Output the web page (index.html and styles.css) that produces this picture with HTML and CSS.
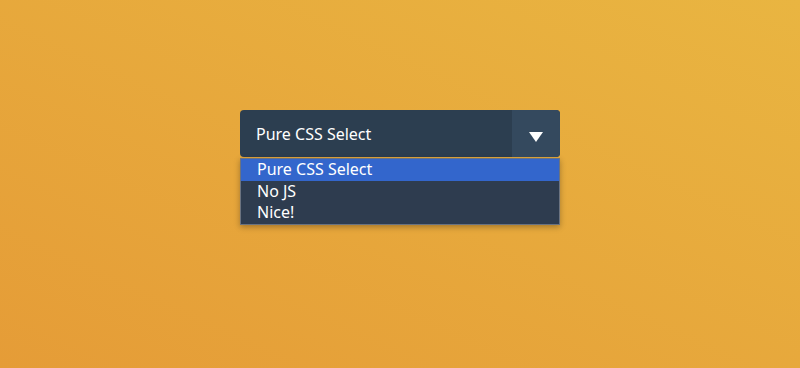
FILE: index.html
```html
<!DOCTYPE html>
<html>
<head>
<meta charset="utf-8">
<link rel="stylesheet" href="styles.css">
</head>
<body>
<div class="page">
  <div class="wrap">
    <div class="select">
      <span class="value">Pure CSS Select</span>
      <span class="arrow"><svg width="14" height="10" viewBox="0 0 14 10"><path d="M0 0H14L7 10Z" fill="#fff"/></svg></span>
    </div>
    <ul class="list">
      <li class="opt active">Pure CSS Select</li>
      <li class="opt">No JS</li>
      <li class="opt">Nice!</li>
    </ul>
  </div>
</div>
</body>
</html>
```
FILE: styles.css
```css
html, body { margin: 0; padding: 0; }
body {
  width: 800px;
  height: 368px;
  overflow: hidden;
  font-family: "Noto Sans", "Open Sans", sans-serif;
}
.page {
  width: 800px;
  height: 368px;
  background: linear-gradient(to top right, #e59c37, #e9b541);
  display: flex;
  justify-content: center;
  padding-top: 110px;
  box-sizing: border-box;
}
.wrap { width: 320px; }
.select {
  height: 47px;
  background: #2c3e50;
  border-radius: 4px;
  display: flex;
  overflow: hidden;
  color: #fff;
}
.value {
  flex: 1;
  padding-left: 16px;
  display: flex;
  align-items: center;
  font-size: 16px;
}
.arrow {
  width: 48px;
  background: #34495e;
  display: flex;
  align-items: center;
  justify-content: center;
  padding-top: 6px;
  box-sizing: border-box;
}
.list {
  list-style: none;
  margin: 1px 0 0;
  padding: 0;
  background: #2e3c4f;
  border: 1px solid #6b7380;
  box-shadow: 0 2px 6px rgba(0,0,0,0.3);
  color: #fff;
  font-size: 16px;
}
.opt {
  height: 21.7px;
  line-height: 21.7px;
  padding-left: 16px;
}
.opt.active { background: #3366cc; }
```
